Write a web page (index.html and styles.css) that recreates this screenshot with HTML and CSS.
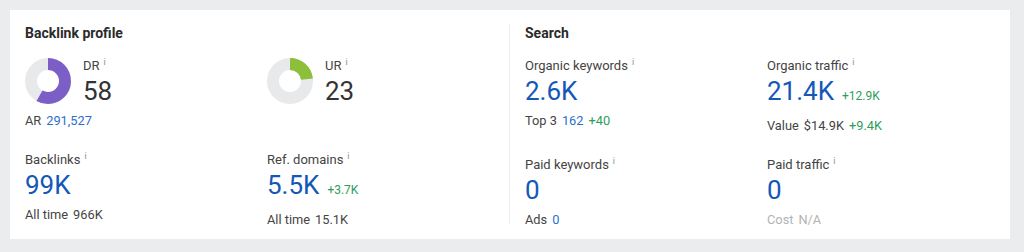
FILE: index.html
```html
<!DOCTYPE html>
<html>
<head>
<meta charset="utf-8">
<link rel="stylesheet" href="styles.css">
</head>
<body>
<div class="page">
  <div class="card">
    <section class="panel">
      <h2 class="title">Backlink profile</h2>
      <div class="grid">
        <div class="metric">
          <div class="rating">
            <svg class="donut" viewBox="0 0 46 46" width="46" height="46">
              <circle cx="23" cy="23" r="17" fill="none" stroke="#e8e9eb" stroke-width="12"/>
              <circle cx="23" cy="23" r="17" fill="none" stroke="#7b5fc6" stroke-width="12" stroke-dasharray="61.95 106.8" transform="rotate(-90 23 23)"/>
            </svg>
            <div>
              <div class="label">DR<sup class="info">i</sup></div>
              <div class="value dark">58</div>
            </div>
          </div>
          <div class="sub"><span>AR</span><span class="blue">291,527</span></div>
        </div>
        <div class="metric">
          <div class="rating">
            <svg class="donut" viewBox="0 0 46 46" width="46" height="46">
              <circle cx="23" cy="23" r="17" fill="none" stroke="#e8e9eb" stroke-width="12"/>
              <circle cx="23" cy="23" r="17" fill="none" stroke="#8cbf3a" stroke-width="12" stroke-dasharray="24.6 106.8" transform="rotate(-90 23 23)"/>
            </svg>
            <div>
              <div class="label">UR<sup class="info">i</sup></div>
              <div class="value dark">23</div>
            </div>
          </div>
        </div>
        <div class="metric">
          <div class="label">Backlinks<sup class="info">i</sup></div>
          <div class="value">99K</div>
          <div class="sub"><span>All time</span><span>966K</span></div>
        </div>
        <div class="metric">
          <div class="label">Ref. domains<sup class="info">i</sup></div>
          <div class="value">5.5K<span class="delta">+3.7K</span></div>
          <div class="sub"><span>All time</span><span>15.1K</span></div>
        </div>
      </div>
    </section>
    <section class="panel panel-right">
      <h2 class="title">Search</h2>
      <div class="grid">
        <div class="metric">
          <div class="label">Organic keywords<sup class="info">i</sup></div>
          <div class="value">2.6K</div>
          <div class="sub"><span>Top 3</span><span class="blue">162</span><span class="green">+40</span></div>
        </div>
        <div class="metric">
          <div class="label">Organic traffic<sup class="info">i</sup></div>
          <div class="value">21.4K<span class="delta">+12.9K</span></div>
          <div class="sub"><span>Value</span><span>$14.9K</span><span class="green">+9.4K</span></div>
        </div>
        <div class="metric">
          <div class="label">Paid keywords<sup class="info">i</sup></div>
          <div class="value">0</div>
          <div class="sub"><span>Ads</span><span class="blue">0</span></div>
        </div>
        <div class="metric">
          <div class="label">Paid traffic<sup class="info">i</sup></div>
          <div class="value">0</div>
          <div class="sub muted"><span>Cost</span><span>N/A</span></div>
        </div>
      </div>
    </section>
  </div>
</div>
</body>
</html>
```

FILE: styles.css
```css
* { box-sizing: border-box; }
html, body { margin: 0; padding: 0; }
body {
  background: #ebecee;
  font-family: Roboto, "Liberation Sans", Arial, sans-serif;
  color: #333;
}
.page { padding: 10px 14px 13px 10px; }
.card {
  background: #fff;
  display: flex;
  padding: 14px 0 15px;
  height: 229px;
}
.panel {
  width: 499px;
  padding-left: 15px;
}
.panel-right {
  border-left: 1px solid #eeeff1;
  padding-left: 15px;
  flex: 1;
}
.title {
  margin: 0 0 16px;
  font-size: 14px;
  line-height: 18px;
  font-weight: 700;
  color: #2b2b2b;
}
.grid {
  display: grid;
  grid-template-columns: 242px 242px;
  row-gap: 23px;
}
.rating {
  display: flex;
  gap: 12px;
}
.donut { display: block; flex: none; }
.label {
  font-size: 13px;
  line-height: 16px;
  color: #444;
}
.info {
  font-size: 9px;
  color: #8e8e8e;
  margin-left: 4px;
  vertical-align: 5px;
  line-height: 0;
}
.value {
  font-size: 26px;
  line-height: 34px;
  color: #1457b8;
  white-space: nowrap;
}
.value.dark { color: #333; }
.delta {
  font-size: 12px;
  color: #2e9d5c;
  margin-left: 8px;
}
.sub {
  margin-top: 5px;
  font-size: 12.8px;
  line-height: 16px;
  display: flex;
  gap: 5px;
  color: #444;
}
.blue { color: #2a6fcf; }
.green { color: #2e9d5c; }
.muted { color: #b3b3b3; }
```
